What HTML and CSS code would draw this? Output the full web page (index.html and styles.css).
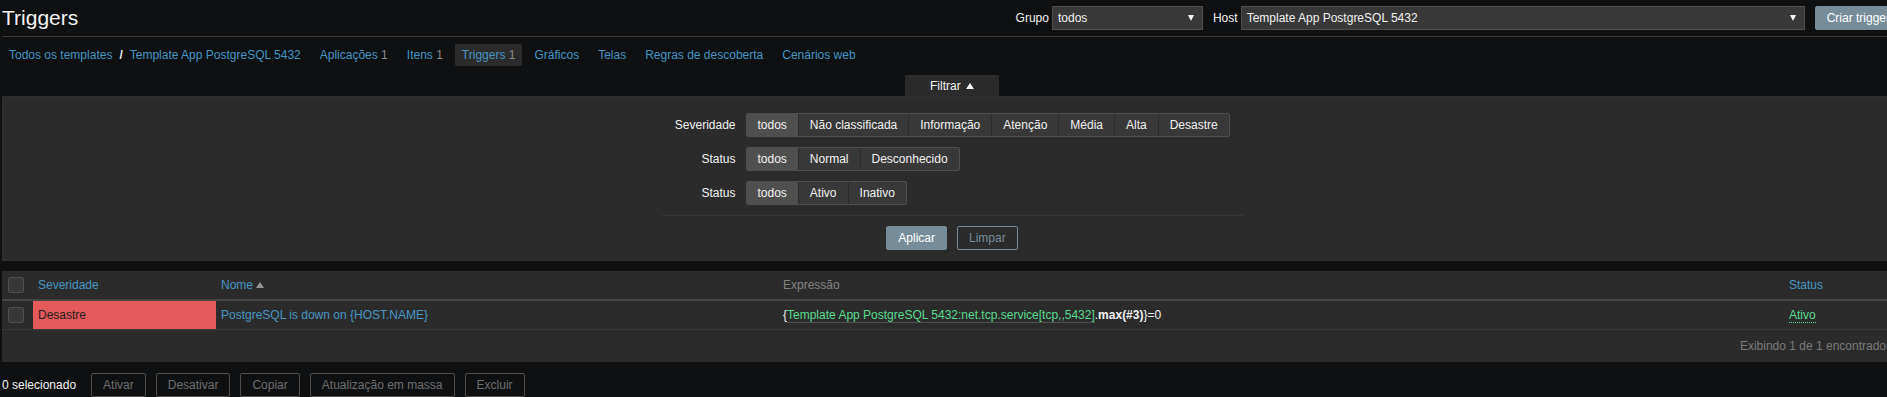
FILE: index.html
```html
<!DOCTYPE html>
<html lang="pt-BR">
<head>
  <meta charset="UTF-8">
  <title>Triggers</title>
  <link rel="stylesheet" href="styles.css">
</head>
<body>
<div class="page">

  <!-- Header -->
  <header class="header-title">
    <h1>Triggers</h1>
    <div class="header-controls">
      <span class="ctl-label">Grupo</span>
      <div class="select select-group"><span>todos</span><i class="caret"></i></div>
      <span class="ctl-label">Host</span>
      <div class="select select-host"><span>Template App PostgreSQL 5432</span><i class="caret"></i></div>
      <button class="btn">Criar trigger</button>
    </div>
  </header>

  <!-- Navigation -->
  <ul class="object-nav">
    <li class="crumb"><a href="#">Todos os templates</a></li>
    <li class="sep">/</li>
    <li><a href="#">Template App PostgreSQL 5432</a></li>
    <li><a href="#">Aplicações</a> <span class="count">1</span></li>
    <li><a href="#">Itens</a> <span class="count">1</span></li>
    <li class="selected"><a href="#">Triggers</a> <span class="count">1</span></li>
    <li><a href="#">Gráficos</a></li>
    <li><a href="#">Telas</a></li>
    <li><a href="#">Regras de descoberta</a></li>
    <li><a href="#">Cenários web</a></li>
  </ul>

  <!-- Filter -->
  <div class="filter">
    <div class="filter-tab">Filtrar <i class="arrow-up"></i></div>
    <div class="filter-panel">
      <div class="filter-form">
        <div class="form-label">Severidade</div>
        <div class="seg">
          <span class="checked">todos</span><span>Não classificada</span><span>Informação</span><span>Atenção</span><span>Média</span><span>Alta</span><span>Desastre</span>
        </div>
        <div class="form-label">Status</div>
        <div class="seg">
          <span class="checked">todos</span><span>Normal</span><span>Desconhecido</span>
        </div>
        <div class="form-label">Status</div>
        <div class="seg">
          <span class="checked">todos</span><span>Ativo</span><span>Inativo</span>
        </div>
      </div>
      <div class="filter-divider"></div>
      <div class="filter-buttons">
        <button class="btn">Aplicar</button>
        <button class="btn btn-alt">Limpar</button>
      </div>
    </div>
  </div>

  <!-- Triggers list -->
  <div class="list">
    <table class="list-table">
      <colgroup>
        <col class="c-check"><col class="c-sev"><col class="c-name"><col class="c-expr"><col>
      </colgroup>
      <thead>
        <tr>
          <th class="cell-check"><span class="checkbox"></span></th>
          <th><a href="#">Severidade</a></th>
          <th><a href="#">Nome</a> <i class="sort-up"></i></th>
          <th class="muted">Expressão</th>
          <th><a href="#">Status</a></th>
        </tr>
      </thead>
      <tbody>
        <tr>
          <td class="cell-check"><span class="checkbox"></span></td>
          <td class="disaster">Desastre</td>
          <td><a href="#">PostgreSQL is down on {HOST.NAME}</a></td>
          <td>{<span class="item-key">Template App PostgreSQL 5432:net.tcp.service[tcp,,5432]</span>.<b>max(#3)</b>}=0</td>
          <td><span class="status-on">Ativo</span></td>
        </tr>
      </tbody>
    </table>
    <div class="paging">Exibindo 1 de 1 encontrados</div>
  </div>

  <!-- Mass actions -->
  <div class="action-bar">
    <span class="selected-count">0 selecionado</span>
    <button class="btn btn-off">Ativar</button>
    <button class="btn btn-off">Desativar</button>
    <button class="btn btn-off">Copiar</button>
    <button class="btn btn-off">Atualização em massa</button>
    <button class="btn btn-off">Excluir</button>
  </div>

</div>
</body>
</html>
```

FILE: styles.css
```css
/* Page */
html, body {
  margin: 0;
  overflow: hidden;
  background: #0e1012;
}

body {
  font-family: "Liberation Sans", Arial, sans-serif;
  font-size: 12px;
  color: #f2f2f2;
}

a {
  color: #4796c4;
  text-decoration: none;
}

.page {
  width: 1900px;
  margin-left: 2px;
}

/* Buttons */
.btn {
  font-family: inherit;
  font-size: 12px;
  height: 24px;
  padding: 0 11px;
  border: 1px solid #768d99;
  border-radius: 2px;
  background-color: #768d99;
  color: #fff;
  cursor: pointer;
}

.btn-alt {
  background-color: transparent;
  color: #768d99;
}

.btn-off {
  background-color: transparent;
  border-color: #4f4f4f;
  color: #6f6f6f;
}

/* Header */
.header-title {
  display: flex;
  align-items: center;
  height: 36px;
  border-bottom: 1px solid #383838;
}

.header-title h1 {
  margin: 0;
  font-size: 21px;
  font-weight: normal;
  line-height: 26px;
}

.header-controls {
  margin-left: auto;
  display: flex;
  align-items: center;
}

.ctl-label {
  margin-right: 3px;
}

.select {
  display: flex;
  align-items: center;
  justify-content: space-between;
  box-sizing: border-box;
  height: 24px;
  padding: 0 8px 0 5px;
  margin-right: 10px;
  background-color: #383838;
  border: 1px solid #4f4f4f;
}

.select-group { width: 151px; }
.select-host { width: 564px; }

.caret {
  width: 0;
  height: 0;
  border-left: 3px solid transparent;
  border-right: 3px solid transparent;
  border-top: 6px solid #f2f2f2;
}

/* Navigation */
.object-nav {
  display: flex;
  margin: 7px 0 0;
  padding: 0;
  list-style: none;
}

.object-nav li {
  padding: 0 7px;
  margin-right: 5px;
  line-height: 22px;
  border-radius: 2px;
}

.object-nav li.crumb {
  margin-right: 0;
}

.object-nav li.sep {
  padding: 0;
  margin: 0;
  font-weight: bold;
}

.object-nav li.selected {
  background-color: #2b2b2b;
}

.count {
  color: #8a8a8a;
}

/* Filter */
.filter {
  margin-top: 9px;
}

.filter-tab {
  width: 94px;
  margin: 0 auto;
  height: 21px;
  line-height: 22px;
  text-align: center;
  background-color: #2b2b2b;
}

.arrow-up {
  display: inline-block;
  width: 0;
  height: 0;
  margin-left: 2px;
  vertical-align: 1px;
  border-left: 4px solid transparent;
  border-right: 4px solid transparent;
  border-bottom: 6px solid #f2f2f2;
}

.filter-panel {
  background-color: #2b2b2b;
  border: 1px solid #2f2f2f;
  padding: 16px 0 10px;
}

.filter-form {
  width: 581px;
  margin: 0 auto;
  display: grid;
  grid-template-columns: 74px auto;
  column-gap: 10px;
  row-gap: 10px;
  align-items: center;
}

.form-label {
  text-align: right;
}

.seg {
  display: flex;
  justify-self: start;
  border: 1px solid #4f4f4f;
  border-radius: 2px;
  background-color: #383838;
}

.seg span {
  padding: 0 11px;
  line-height: 22px;
  border-left: 1px solid #2b2b2b;
}

.seg span:first-child {
  border-left: none;
}

.seg span.checked {
  background-color: #4f4f4f;
}

.filter-divider {
  width: 581px;
  margin: 10px auto 0;
  border-top: 1px solid #383838;
}

.filter-buttons {
  display: flex;
  justify-content: center;
  gap: 10px;
  margin-top: 10px;
}

/* Table */
.list {
  margin-top: 10px;
  background-color: #2b2b2b;
}

.list-table {
  width: 100%;
  border-collapse: collapse;
  table-layout: fixed;
}

.c-check { width: 31px; }
.c-sev { width: 183px; }
.c-name { width: 562px; }
.c-expr { width: 1006px; }

.list-table th,
.list-table td {
  padding: 0 5px;
  height: 28px;
  text-align: left;
  font-weight: normal;
  white-space: nowrap;
}

.list-table th {
  border-bottom: 2px solid #454545;
}

.list-table td {
  border-bottom: 1px solid #383838;
}

.list-table .cell-check {
  padding-left: 6px;
}

.list-table .muted {
  color: #838383;
}

.checkbox {
  display: block;
  box-sizing: border-box;
  width: 16px;
  height: 16px;
  border: 1px solid #4f4f4f;
  border-radius: 2px;
  background-color: #383838;
}

.sort-up {
  display: inline-block;
  width: 0;
  height: 0;
  vertical-align: 1px;
  border-left: 4px solid transparent;
  border-right: 4px solid transparent;
  border-bottom: 6px solid #969696;
}

.disaster {
  background-color: #e45959;
  color: #1e1e1e;
}

.item-key {
  color: #59db8f;
  border-bottom: 1px solid #4f4f4f;
}

.status-on {
  color: #59db8f;
  border-bottom: 1px dotted #59db8f;
}

.paging {
  height: 32px;
  line-height: 32px;
  padding-right: 10px;
  text-align: right;
  color: #7a7a7a;
}

/* Mass actions */
.action-bar {
  display: flex;
  align-items: center;
  gap: 10px;
  margin-top: 11px;
}

.selected-count {
  margin-right: 5px;
}
```
